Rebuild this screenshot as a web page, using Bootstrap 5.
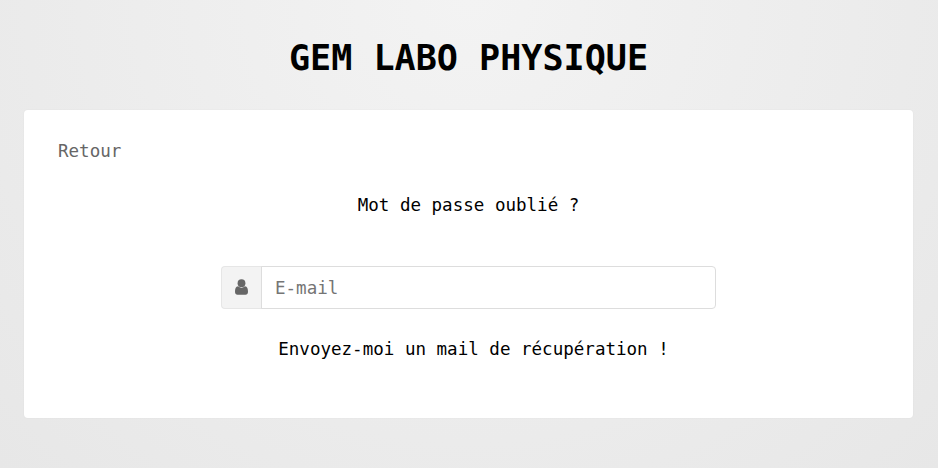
<!DOCTYPE html>
<html lang="fr">
<head>
<meta charset="utf-8">
<meta name="viewport" content="width=device-width, initial-scale=1">
<title>GEM Labo Physique</title>
<link href="https://cdn.jsdelivr.net/npm/bootstrap@5.3.0/dist/css/bootstrap.min.css" rel="stylesheet">
<style>
body{font-family:"DejaVu Sans Mono","Liberation Mono",monospace;font-size:17.54px;line-height:26px;color:#000;background:radial-gradient(circle at 50% 0,#f3f3f3,#e7e7e7) no-repeat;min-height:468px;overflow:hidden}
.page{padding:0 25px 0 24px}
.site-title{height:110px;padding-top:38px;font-size:35.1px;line-height:40px;font-weight:700}
.panel{height:308px;border-radius:4px;padding:28px 34px 0;box-shadow:0 0 1px 1px rgba(0,0,0,.015)}
.back-link{color:#666;align-self:flex-start}
.recover-form{width:495px;margin-top:48px}
.mail-group{height:43px}
.mail-group .input-group-text{width:41px;padding:0 0 2px;background:#f3f3f3;border-color:#e6e6e6 #ddd #e6e6e6 #e6e6e6;border-radius:4px;color:#666}
.mail-group .form-control{font-size:17.54px;padding:2px 13px 0;border-color:#ddd;border-radius:4px}
.mail-group .form-control::placeholder{color:#757575}
.send-btn{font-size:17.54px;line-height:26px;margin:27px 0 0 10px;color:#000}
</style>
<script src="https://cdn.jsdelivr.net/npm/bootstrap@5.3.0/dist/js/bootstrap.bundle.min.js"></script>
</head>
<body>
<main class="page">
  <h1 class="site-title text-center mb-0">GEM LABO PHYSIQUE</h1>
  <section class="panel bg-white d-flex flex-column align-items-center">
    <a href="#" class="back-link text-decoration-none">Retour</a>
    <p class="mb-0 mt-4 pt-1 text-center">Mot de passe oublié ?</p>
    <form class="recover-form d-flex flex-column align-items-center">
      <div class="input-group mail-group">
        <span class="input-group-text justify-content-center">
          <svg width="13" height="16" viewBox="0 0 13 16" fill="currentColor" aria-hidden="true"><circle cx="6.5" cy="4.2" r="3.9"/><path d="M3.1 7.3C.6 7.6 0 9.8 0 12.8 0 14.8 1 15.8 2.5 15.8h8c1.5 0 2.5-1 2.5-3 0-3-.6-5.2-3.1-5.5C9 8.2 7.8 8.7 6.5 8.7S4 8.2 3.1 7.3z"/></svg>
        </span>
        <input type="email" class="form-control" placeholder="E-mail" aria-label="E-mail">
      </div>
      <button type="button" class="btn p-0 border-0 send-btn">Envoyez-moi un mail de récupération !</button>
    </form>
  </section>
</main>
</body>
</html>
